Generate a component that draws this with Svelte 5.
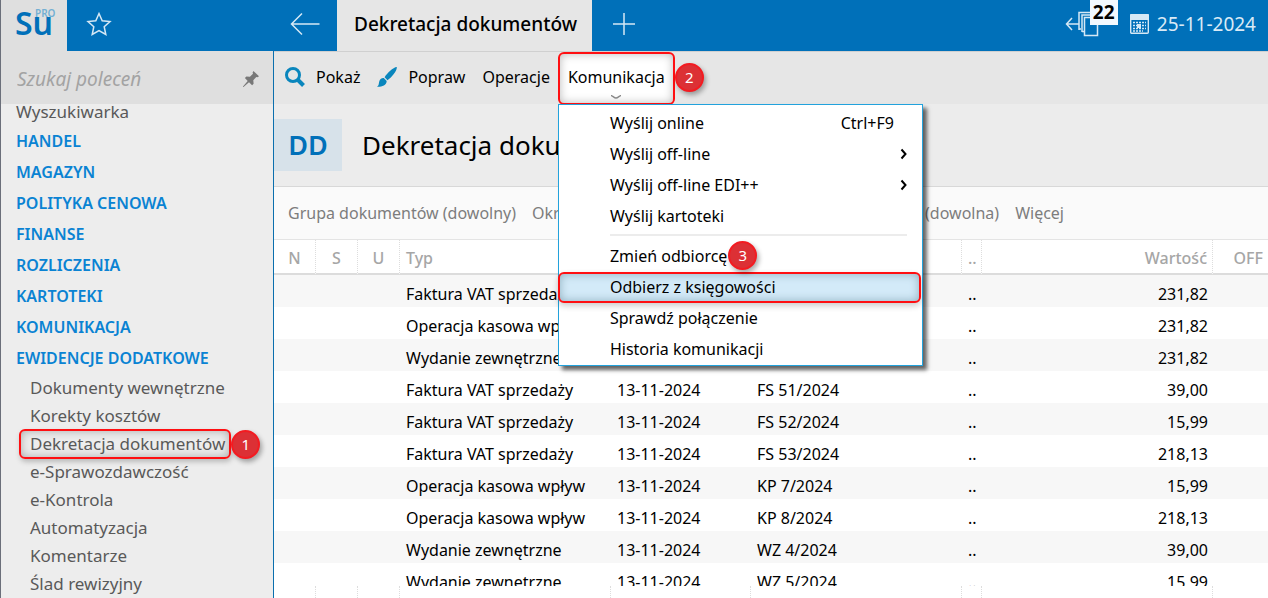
<script lang="ts">
	interface MenuItem {
		label: string;
		shortcut?: string;
		submenu?: boolean;
		step?: number;
		active?: boolean;
	}

	const groups = [
		'HANDEL',
		'MAGAZYN',
		'POLITYKA CENOWA',
		'FINANSE',
		'ROZLICZENIA',
		'KARTOTEKI',
		'KOMUNIKACJA',
		'EWIDENCJE DODATKOWE'
	];
	const records = [
		'Dokumenty wewnętrzne',
		'Korekty kosztów',
		'Dekretacja dokumentów',
		'e-Sprawozdawczość',
		'e-Kontrola',
		'Automatyzacja',
		'Komentarze',
		'Ślad rewizyjny'
	];
	const current = 'Dekretacja dokumentów';

	const sendItems: MenuItem[] = [
		{ label: 'Wyślij online', shortcut: 'Ctrl+F9' },
		{ label: 'Wyślij off-line', submenu: true },
		{ label: 'Wyślij off-line EDI++', submenu: true },
		{ label: 'Wyślij kartoteki' }
	];
	const receiveItems: MenuItem[] = [
		{ label: 'Zmień odbiorcę', step: 3 },
		{ label: 'Odbierz z księgowości', active: true },
		{ label: 'Sprawdź połączenie' },
		{ label: 'Historia komunikacji' }
	];

	const rows = [
		{ type: 'Faktura VAT sprzedaży', no: 'FS 48/2024', value: '231,82' },
		{ type: 'Operacja kasowa wpływ', no: 'KP 6/2024', value: '231,82' },
		{ type: 'Wydanie zewnętrzne', no: 'WZ 3/2024', value: '231,82' },
		{ type: 'Faktura VAT sprzedaży', no: 'FS 51/2024', value: '39,00' },
		{ type: 'Faktura VAT sprzedaży', no: 'FS 52/2024', value: '15,99' },
		{ type: 'Faktura VAT sprzedaży', no: 'FS 53/2024', value: '218,13' },
		{ type: 'Operacja kasowa wpływ', no: 'KP 7/2024', value: '15,99' },
		{ type: 'Operacja kasowa wpływ', no: 'KP 8/2024', value: '218,13' },
		{ type: 'Wydanie zewnętrzne', no: 'WZ 4/2024', value: '39,00' },
		{ type: 'Wydanie zewnętrzne', no: 'WZ 5/2024', value: '15,99' }
	];

	let open = $state(true);
</script>

{#snippet entry(item: MenuItem)}
	<button class="entry" class:active={item.active} role="menuitem">
		<span>{item.label}</span>
		{#if item.step}<i class="step">{item.step}</i>{/if}
		{#if item.shortcut}<span class="shortcut">{item.shortcut}</span>{/if}
		{#if item.submenu}
			<svg class="more" width="8" height="12" viewBox="0 0 8 12"><path d="M1.500 1.500 5.500 6l-4 4.500" /></svg>
		{/if}
	</button>
{/snippet}

<div class="app">
	<header>
		<div class="logo"><b>Su</b><sup>PRO</sup></div>
		<div class="side-tools">
			<button class="icon" aria-label="Ulubione">
				<svg width="26" height="26" viewBox="0 0 26 26"><path d="M13 2.500l3.200 7.200 7.800.8-5.800 5.200 1.600 7.800-6.800-4-6.800 4 1.600-7.800L2 10.500l7.800-.8z" /></svg>
			</button>
			<button class="icon" aria-label="Wstecz">
				<svg width="30" height="24" viewBox="0 0 30 24"><path d="M29.500 12H1.500M12 1.500 1.500 12 12 22.500" /></svg>
			</button>
		</div>
		<button class="tab">Dekretacja dokumentów</button>
		<button class="icon plus" aria-label="Nowa karta">
			<svg width="24" height="24" viewBox="0 0 24 24"><path d="M12 1v22M1 12h22" /></svg>
		</button>
		<div class="status">
			<button class="icon windows" aria-label="Otwarte okna">
				<svg width="34" height="26" viewBox="0 0 34 26">
					<path d="M14 13H1.500M7 7l-5.500 6L7 19M14 19V1.500h11M14 18h2M17 21V4h10M17 20.500h2M19.500 6.500h13v18h-13z" />
				</svg>
				<span class="count">22</span>
			</button>
			<svg class="calendar" width="19" height="20" viewBox="0 0 19 20">
				<rect class="fill" width="19" height="6" rx="1" />
				<rect x=".7" y=".7" width="17.600" height="18.600" rx="1" />
				<path class="days" d="M3 8.500h13M3 11.500h13M3 14.500h13M3 17h10" />
				<path class="fill" d="M7 10h4v4H7z" />
			</svg>
			<time>25-11-2024</time>
		</div>
	</header>

	<div class="body">
		<aside>
			<div class="search">
				<input type="text" placeholder="Szukaj poleceń" aria-label="Szukaj poleceń" />
				<svg class="pin" width="16" height="16" viewBox="0 0 16 16">
					<path d="M10.500 0 16 5.300l-1.500.9-1.200-.3-3 3.300.3 3.500-1.500 1.500L6 11.200.5 16H0v-.6L4.700 9.900 1.900 6.900l1.500-1.400 3.500.2L10 2.800 9.600 1.400z" />
				</svg>
			</div>
			<nav>
				<a class="sub top" href="#wyszukiwarka">Wyszukiwarka</a>
				{#each groups as group}
					<a class="group" href="#menu">{group}</a>
				{/each}
				{#each records as record}
					<a class="sub" class:marked={record === current} href="#menu">
						<span>{record}</span>
						{#if record === current}<i class="step">1</i>{/if}
					</a>
				{/each}
			</nav>
		</aside>

		<main>
			<div class="toolbar">
				<button class="action">
					<svg width="20" height="20" viewBox="0 0 20 20">
						<circle class="lens" cx="8" cy="8" r="6.500" /><path class="handle" d="m13 13 5.500 5.500" />
					</svg>
					Pokaż
				</button>
				<button class="action brush">
					<svg width="20" height="20" viewBox="0 0 20 20">
						<path d="M19.800 0c.5 3.500-5.300 10.500-9.300 13.200L7.600 10.200C10.200 6.200 16 .3 19.800 0zM6.800 11l2.900 3c-.2 4.600-5 5.900-9.700 5.700 2-1.300 1.600-2.700 2.100-4.800.6-2.500 2.400-4.100 4.700-3.900z" />
					</svg>
					Popraw
				</button>
				<button class="action">Operacje</button>
				<div class="dropdown">
					<button class="trigger" aria-expanded={open} onclick={() => (open = !open)}>
						Komunikacja
						<svg width="12" height="4" viewBox="0 0 12 4"><path d="M1 .5C2.500.5 4 3 6 3s3.500-2.500 5-2.500" /></svg>
					</button>
					{#if open}
						<div class="menu" role="menu">
							{#each sendItems as item}{@render entry(item)}{/each}
							<hr />
							{#each receiveItems as item}{@render entry(item)}{/each}
						</div>
					{/if}
				</div>
				<i class="step">2</i>
			</div>

			<div class="heading">
				<span class="code">DD</span>
				<h1>Dekretacja dokumentów</h1>
			</div>

			<div class="filters">
				<button>Grupa dokumentów (dowolny)</button>
				<button class="period">Okres</button>
				<button>(dowolna)</button>
				<button>Więcej</button>
			</div>

			<div class="list">
				<table>
					<thead>
						<tr>
							<th class="flag">N</th>
							<th class="flag">S</th>
							<th class="flag">U</th>
							<th class="type">Typ</th>
							<th class="date"></th>
							<th></th>
							<th class="dots">..</th>
							<th class="value">Wartość</th>
							<th class="off">OFF</th>
						</tr>
					</thead>
					<tbody>
						{#each rows as row}
							<tr>
								<td></td>
								<td></td>
								<td></td>
								<td>{row.type}</td>
								<td>13-11-2024</td>
								<td>{row.no}</td>
								<td class="dots">..</td>
								<td class="value">{row.value}</td>
								<td></td>
							</tr>
						{/each}
					</tbody>
				</table>
			</div>
			<div class="rails">
				{#each Array(9) as _}<span></span>{/each}
			</div>
		</main>
	</div>
</div>

<style>
	:global(body) { margin: 0; }
	.app { --blue: #0070b9; --red: #ff0f12; display: flex; flex-direction: column; height: 100vh; box-sizing: border-box; border-left: 1px solid #6b6f7a; overflow: hidden; font: 16px/24px "Noto Sans", "Open Sans", sans-serif; color: #000; background: #fff; }
	button { font: inherit; color: inherit; background: none; border: 0; padding: 0; margin: 0; text-align: left; white-space: nowrap; cursor: pointer; }
	a { text-decoration: none; }
	svg { display: block; flex: none; }

	header { display: flex; align-items: stretch; flex: none; height: 51px; background: var(--blue); }
	.logo { display: flex; box-sizing: border-box; width: 66px; padding: 7px 0 0 14px; background: #dfdfdf; color: var(--blue); }
	.logo b { font-size: 32px; line-height: 32px; font-weight: 600; }
	.logo sup { margin-left: -18px; font-size: 10px; line-height: 12px; font-weight: 600; color: #74afd3; }
	.side-tools { display: flex; justify-content: space-between; align-items: center; box-sizing: border-box; width: 270px; padding: 0 17px 3px 19px; }
	.icon svg { fill: none; stroke: #d5e8f5; stroke-width: 1.5; }
	.tab { padding: 0 15px 3px 17px; background: #e6e6e6; font-size: 19px; font-weight: 500; }
	.plus { padding: 0 20px 3px; }
	.status { display: flex; align-items: center; margin-left: auto; padding: 0 12px 4px 0; color: #d9eaf6; font-size: 19px; }
	.windows { position: relative; margin-right: 31px; }
	.count { position: absolute; left: 25px; top: -12px; padding: 0 3px; background: #f2f9ff; color: #000; font-size: 19px; line-height: 26px; font-weight: 700; }
	.calendar { margin-right: 8px; fill: none; stroke: #d5e8f5; stroke-width: 1.4; }
	.calendar .fill { fill: #d5e8f5; stroke: none; }
	.calendar .days { stroke-dasharray: 2 1; stroke-width: 1.5; }

	.body { display: flex; flex: 1; min-height: 0; }
	aside { display: flex; flex-direction: column; flex: none; width: 272px; border-right: 1px solid #0b6fae; background: #ededed; }
	.search { display: flex; align-items: center; flex: none; box-sizing: border-box; height: 53px; padding: 2px 14px 0 16px; background: #dfdfdf; }
	.search input { flex: 1; min-width: 0; padding: 0; border: 0; outline: 0; background: none; font: italic 19px/26px "Noto Sans", "Open Sans", sans-serif; }
	.search input::placeholder { color: #a3a3a3; opacity: 1; }
	.pin { fill: #787878; }
	nav { display: flex; flex: 1; flex-direction: column; justify-content: flex-end; min-height: 0; overflow: hidden; }
	nav a { flex: none; }
	.group { padding-left: 15px; line-height: 31px; font-weight: 600; color: #0a83d3; }
	.sub { display: flex; align-items: center; height: 28px; padding-left: 19px; font-size: 17px; line-height: 28px; color: #595959; }
	.sub span { padding: 0 5px 0 10px; }
	.top span, .top { padding-left: 15px; }
	.marked { padding-left: 18px; }
	.marked span { padding: 0 4px 0 9px; border: 2px solid var(--red); border-radius: 6px; line-height: 26px; box-shadow: inset 0 0 10px #aaa, 1px 3px 5px #bbb; }

	.step { display: inline-block; flex: none; box-sizing: border-box; width: 29px; height: 29px; border: 2px solid #f31b21; border-radius: 50%; background: #dc3035; box-shadow: 2px 3px 5px #0005; color: #fff; font-size: 15px; line-height: 25px; font-style: normal; text-align: center; }

	main { display: flex; flex: 1; flex-direction: column; min-width: 0; }
	.toolbar { display: flex; align-items: center; flex: none; box-sizing: border-box; height: 53px; padding: 0 0 2px 11px; border-top: 1px solid #d0d0d0; background: #e6e6e6; }
	.action { display: flex; align-items: center; gap: 11px; margin-right: 17px; }
	.action svg { fill: #0a86bd; }
	.action .lens { fill: none; stroke: #0a86bd; stroke-width: 3; }
	.action .handle { stroke: #0a86bd; stroke-width: 4; }
	.dropdown { position: relative; z-index: 2; align-self: stretch; margin-left: -9px; }
	.trigger { box-sizing: border-box; height: 53px; padding: 11px 8px 0; border: 2px solid var(--red); border-radius: 6px; background: #fff; box-shadow: inset 0 0 10px #bbb; }
	.trigger svg { margin: 6px auto 4px; fill: none; stroke: #888; stroke-width: 1.3; }
	.toolbar > .step { z-index: 2; }
	.menu { position: absolute; top: 52px; left: 0; box-sizing: border-box; width: 365px; padding-top: 3px; border: 1px solid #22a2dc; background: #fff; box-shadow: 4px 4px 4px #0009; }
	.entry { display: flex; align-items: center; box-sizing: border-box; width: 100%; height: 31px; padding: 0 14px 2px 51px; }
	.entry .step { margin: 0 0 0 1px; z-index: 1; }
	.shortcut { margin-left: auto; padding-right: 14px; }
	.more { margin-left: auto; fill: none; stroke: #000; stroke-width: 2; }
	.entry.active { width: 363px; margin-left: -1px; padding-left: 50px; border: 2px solid var(--red); border-radius: 6px; background: #d3eaf8; box-shadow: inset 0 0 10px #8fb0c0, 0 3px 6px #0003; }
	hr { height: 2px; margin: 2px 15px 5px 51px; border: 0; background: #ececec; }

	.heading { display: flex; align-items: center; flex: none; box-sizing: border-box; height: 83px; border-bottom: 1px solid #d8d8d8; background: #ececec; }
	.code { width: 68px; margin-right: 20px; background: #d7e2ea; color: var(--blue); font-size: 27px; line-height: 52px; font-weight: 600; text-align: center; }
	h1 { margin: 0; font-size: 26px; line-height: 52px; font-weight: 400; white-space: nowrap; }
	.filters { display: flex; align-items: center; gap: 16px; flex: none; box-sizing: border-box; height: 53px; padding-left: 14px; border-bottom: 1px solid #e4e4e4; background: #fafafa; color: #7d7d7d; }
	.period { width: 377px; }

	.list { flex: 1; min-height: 0; overflow: hidden; }
	table { width: 100%; table-layout: fixed; border-collapse: separate; border-spacing: 0; }
	th, td { box-sizing: border-box; padding: 0 5px 0 6px; font-weight: 400; text-align: left; white-space: nowrap; overflow: hidden; }
	th { height: 35px; padding-top: 2px; border-right: 1px dotted #ddd; border-bottom: 2px solid #dcdcdc; color: #a6a6a6; font-weight: 500; }
	th:last-child { border-right: 0; }
	td { height: 32px; padding-top: 6px; }
	tbody tr:nth-child(odd) { background: #f7f7f7; }
	.flag { width: 42px; padding-left: 0; padding-right: 0; text-align: center; }
	.type { width: 211px; }
	.date { width: 140px; }
	.dots { width: 20px; padding-right: 0; }
	.value { width: 231px; text-align: right; }
	.off { width: 55px; text-align: right; }
	.rails { display: grid; flex: none; height: 12px; grid-template-columns: 42px 42px 42px 211px 140px 1fr 20px 231px 55px; background: #fff; }
	.rails span { border-right: 1px dotted #ddd; }
	.rails span:last-child { border-right: 0; }
</style>
